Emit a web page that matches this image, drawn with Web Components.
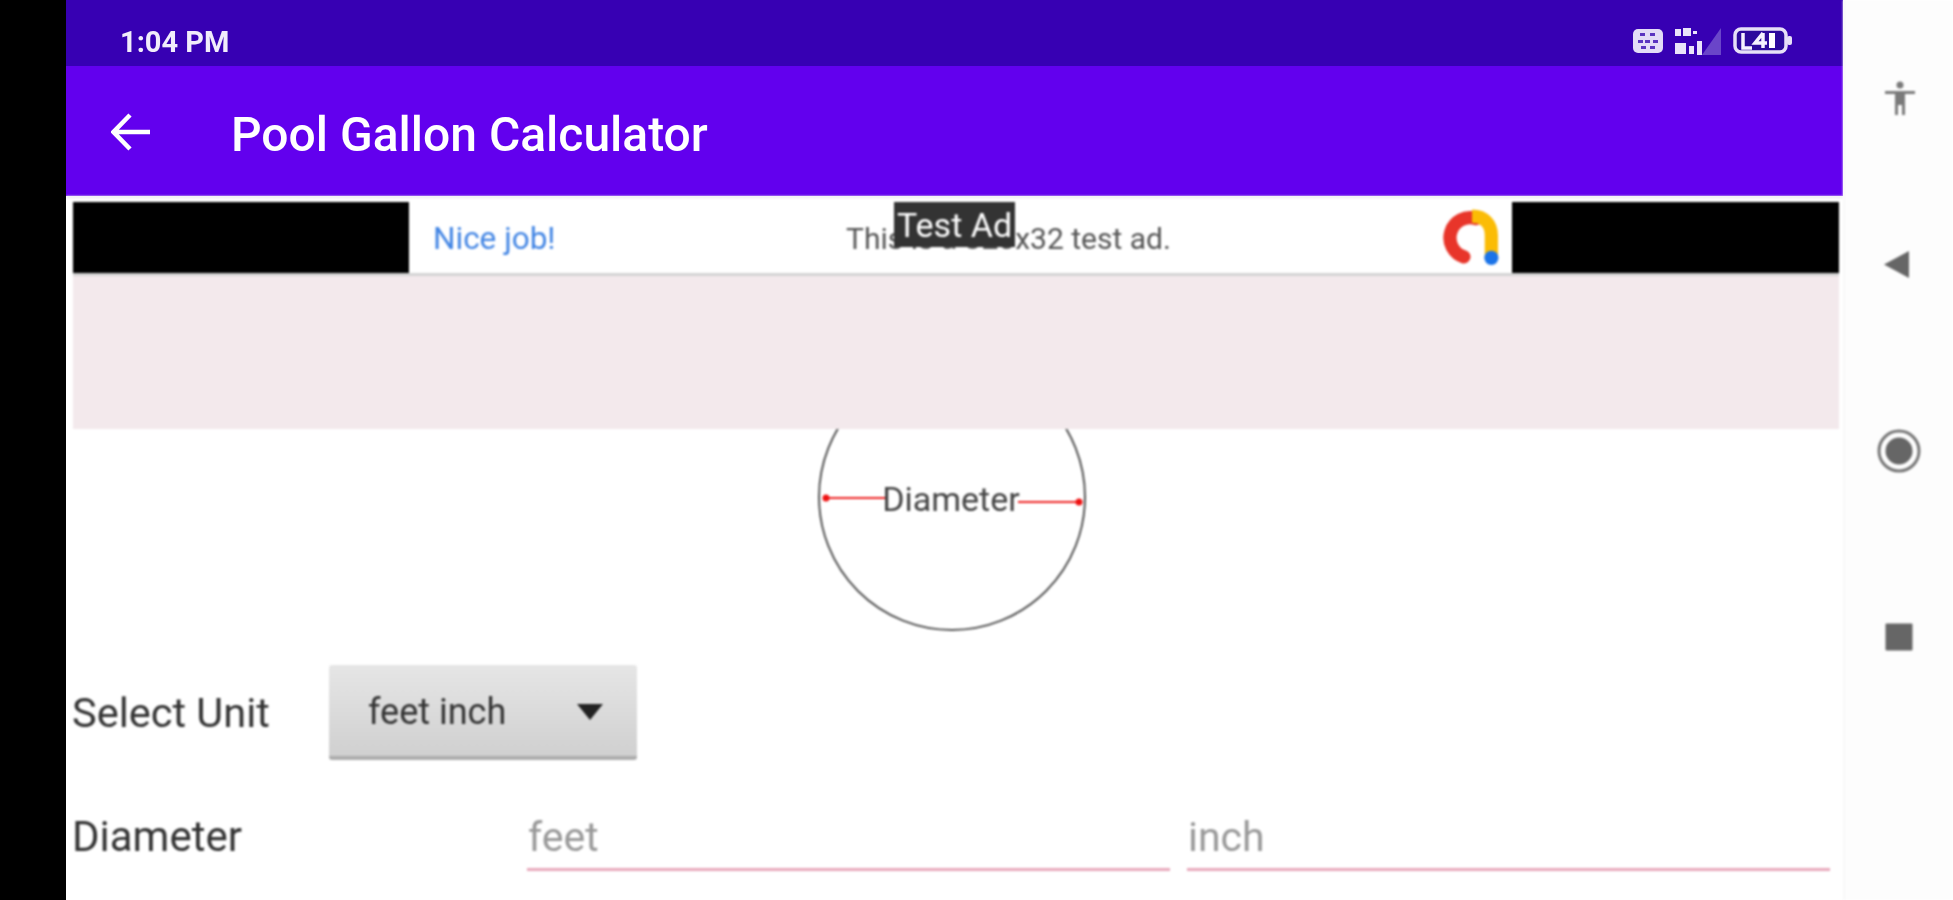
<!DOCTYPE html>
<html><head><meta charset="utf-8">
<style>
html,body{margin:0;padding:0;background:#fff;height:100%;overflow:hidden}
body{font-family:Roboto,"Liberation Sans",sans-serif}
</style></head>
<body>
<pool-screen>
  <status-bar slot="top" time="1:04 PM"></status-bar>
  <app-bar slot="top">Pool Gallon Calculator</app-bar>
  <ad-banner slot="top"></ad-banner>
  <circle-diagram></circle-diagram>
  <unit-row label="Select Unit" value="feet inch"></unit-row>
  <measure-row label="Diameter" first="feet" second="inch"></measure-row>
</pool-screen>
<script>
function def(name,html,init){
  customElements.define(name,class extends HTMLElement{
    constructor(){super();const r=this.attachShadow({mode:'open'});r.innerHTML=html;}
    connectedCallback(){if(init)init(this,this.shadowRoot);}
  });
}
def('pool-screen',`<style>
:host{display:flex;width:1953px;height:900px;overflow:hidden;background:#fff}
.bezel{width:66px;background:#000;flex:none}
.phone{width:1777px;flex:none;display:flex;flex-direction:column;height:900px;overflow:hidden}
.body{display:flex;flex-direction:column;padding:0 13px 0 6px;filter:blur(.8px)}
</style>
<div class="bezel"></div>
<div class="phone"><slot name="top"></slot><div class="body"><slot></slot></div></div>
<nav-rail></nav-rail>`);

def('status-bar',`<style>
:host{display:flex;align-items:center;height:66px;background:#3700b3;color:#f1ecfb;padding:15px 50px 0 54px;box-sizing:border-box;filter:blur(.7px)}
.t{font:700 29px Roboto,"Liberation Sans",sans-serif;flex:1;position:relative;top:1px}
.icons{display:flex;align-items:center;gap:11px}
svg{display:block}
</style>
<span class="t"></span>
<span class="icons">
<svg width="30" height="24" viewBox="0 0 30 24"><rect width="30" height="24" rx="5" fill="#e3dcf7"/><g fill="#5a35c0"><rect x="7" y="4" width="5" height="3"/><rect x="17" y="4" width="5" height="3"/><rect x="5" y="11" width="5" height="3"/><rect x="12" y="11" width="5" height="3"/><rect x="20" y="11" width="5" height="3"/><rect x="8" y="17" width="5" height="3"/><rect x="17" y="17" width="5" height="3"/></g></svg>
<svg width="48" height="28" viewBox="0 0 48 28"><polygon points="47,1 47,28 28,28" fill="#6a45c9"/><g fill="#eae4fa"><rect x="1" y="2" width="6" height="7"/><rect x="9" y="1" width="8" height="8"/><rect x="19" y="4" width="4" height="3"/><rect x="1" y="16" width="11" height="11"/><rect x="15" y="19" width="5" height="8"/><rect x="23" y="14" width="5" height="14"/></g></svg>
<svg width="60" height="27" viewBox="0 0 60 27"><rect x="2" y="2" width="51" height="23" rx="6" fill="#2c0a9c" stroke="#e6dff8" stroke-width="3.5"/><rect x="54" y="9" width="5" height="9" rx="2" fill="#e6dff8"/><rect x="36" y="6" width="6" height="15" fill="#fff"/><path d="M10 6v15h9M30 6l-8 10h12M30 6v15" fill="none" stroke="#f5f2ff" stroke-width="3.5"/></svg>
</span>`,(h,r)=>{r.querySelector('.t').textContent=h.getAttribute('time')});

def('app-bar',`<style>
:host{display:flex;align-items:center;height:130px;background:#6200ee;color:#fff;box-sizing:border-box;padding:2px 0 0 45px;filter:blur(.7px)}
svg{display:block;margin-right:81px;flex:none}
span{font:500 48px Roboto,"Liberation Sans",sans-serif;position:relative;top:2px}
</style>
<svg width="39" height="38" viewBox="0 0 39 38"><path d="M19 2 2.5 19 19 36M3 19h36" fill="none" stroke="#fff" stroke-width="4.5"/></svg>
<span><slot></slot></span>`);

def('ad-banner',`<style>
:host{display:block;padding:6px 4px 0 7px;background:linear-gradient(#e6e6ec 0,#fff 3px);height:233px;box-sizing:border-box;filter:blur(.8px)}
.ad{display:flex;height:71px;border-bottom:3px solid #d4d4d4;background:#fff}
.side{width:336px;background:#000;flex:none}
.side.r{width:327px}
.mid{flex:1;position:relative;display:flex;align-items:center;padding:2px 13px 0 24px;font:400 30px Roboto,"Liberation Sans",sans-serif;color:#555}
.nice{color:#4285e4;width:413px;flex:none;font-size:31.5px}
.txt{flex:1}
.tag{position:absolute;left:485px;top:0;width:121px;height:45px;background:#333;color:#fff;font:400 34px/46px Roboto,"Liberation Sans",sans-serif;text-align:center;white-space:nowrap}
svg{display:block;flex:none;margin-top:-2px}
.pink{height:153px;background:#f3e9ec}
</style>
<div class="ad"><div class="side"></div>
<div class="mid"><span class="nice">Nice job!</span><span class="txt">This is a 320x32 test ad.</span><span class="tag">Test Ad</span>
<svg width="58" height="57" viewBox="0 0 56 56"><path d="M32 8.5A19.5 19.5 0 1 0 20 46" transform="translate(2 1)" fill="none" stroke="#e8352a" stroke-width="13" stroke-linecap="round"/><path d="M30 7C42 7 49 15 49 26V48" fill="none" stroke="#fbbc05" stroke-width="13"/><circle cx="49" cy="48" r="7" fill="#1a73e8"/></svg>
</div><div class="side r"></div></div>
<div class="pink"></div>`);

def('circle-diagram',`<style>
:host{display:block;height:200px;position:relative}
svg{display:block;margin:0 auto;position:relative;left:1px;overflow:hidden}
</style>
<svg width="272" height="202" viewBox="0 68 272 202"><circle cx="136" cy="136" r="133" fill="none" stroke="#555" stroke-width="2"/><path d="M9 137 L70 137M202 141 L265 141" stroke="#ee2222" stroke-width="2"/><circle cx="10" cy="137" r="3.5" fill="#ee1111"/><circle cx="263" cy="141" r="3.5" fill="#ee1111"/><text x="135" y="150" text-anchor="middle" font-family="Roboto" font-size="34" fill="#444">Diameter</text></svg>`);

def('unit-row',`<style>
:host{display:flex;align-items:center;margin-top:36px;height:95px;font:400 41.5px Roboto,"Liberation Sans",sans-serif;color:#333}
.l{width:257px;flex:none}
.b{width:308px;height:95px;box-sizing:border-box;display:flex;align-items:center;justify-content:space-between;padding:3px 34px 0 39px;border-radius:3px;background:linear-gradient(#e6e6e6,#d0d0d0);border-bottom:4px solid #adadad;font-size:36px}
i{display:block;width:0;height:0;border:13px solid transparent;border-top:16px solid #222;border-bottom:0;margin-top:0}
</style><span class="l"></span><span class="b"><span class="v"></span><i></i></span>`,(h,r)=>{r.querySelector('.l').textContent=h.getAttribute('label');r.querySelector('.v').textContent=h.getAttribute('value')});

def('measure-row',`<style>
:host{display:grid;grid-template-columns:438px 1fr 1fr;column-gap:17px;margin-top:48px;font:400 42px Roboto,"Liberation Sans",sans-serif;color:#333;align-items:end}
.l{margin-right:-17px;height:60px;line-height:58px;align-self:start}
.f{border-bottom:3px solid #e8a9bc;height:60px;line-height:58px;color:#999;padding-left:1px;font-size:41px}
</style><span class="l"></span><span class="f a"></span><span class="f b"></span>`,(h,r)=>{r.querySelector('.l').textContent=h.getAttribute('label');r.querySelector('.a').textContent=h.getAttribute('first');r.querySelector('.b').textContent=h.getAttribute('second')});

def('nav-rail',`<style>
:host{display:block;position:relative;width:110px;flex:none;height:900px;background:#fdfdfd;border-left:2px solid #f8f8f8;box-sizing:border-box;filter:blur(.8px)}
svg{position:absolute;display:block}
</style>
<svg style="left:39px;top:81px" width="32" height="35" viewBox="0 0 32 35"><circle cx="16" cy="4" r="3.5" fill="#7a7a7a"/><path d="M1 10H31V13H21V34H18V24H14V34H11V13H1Z" fill="#7a7a7a"/></svg>
<svg style="left:38px;top:250px" width="27" height="29" viewBox="0 0 27 29"><path d="M26 1V28L1 14.5Z" fill="#666"/></svg>
<svg style="left:32px;top:429px" width="44" height="44" viewBox="0 0 44 44"><circle cx="22" cy="22" r="20" fill="none" stroke="#777" stroke-width="3"/><circle cx="22" cy="22" r="13.5" fill="#666"/></svg>
<svg style="left:40px;top:623px" width="28" height="28" viewBox="0 0 28 28"><rect x="0.5" y="0.5" width="27" height="27" rx="1" fill="#666"/></svg>`);
</script>
</body></html>
